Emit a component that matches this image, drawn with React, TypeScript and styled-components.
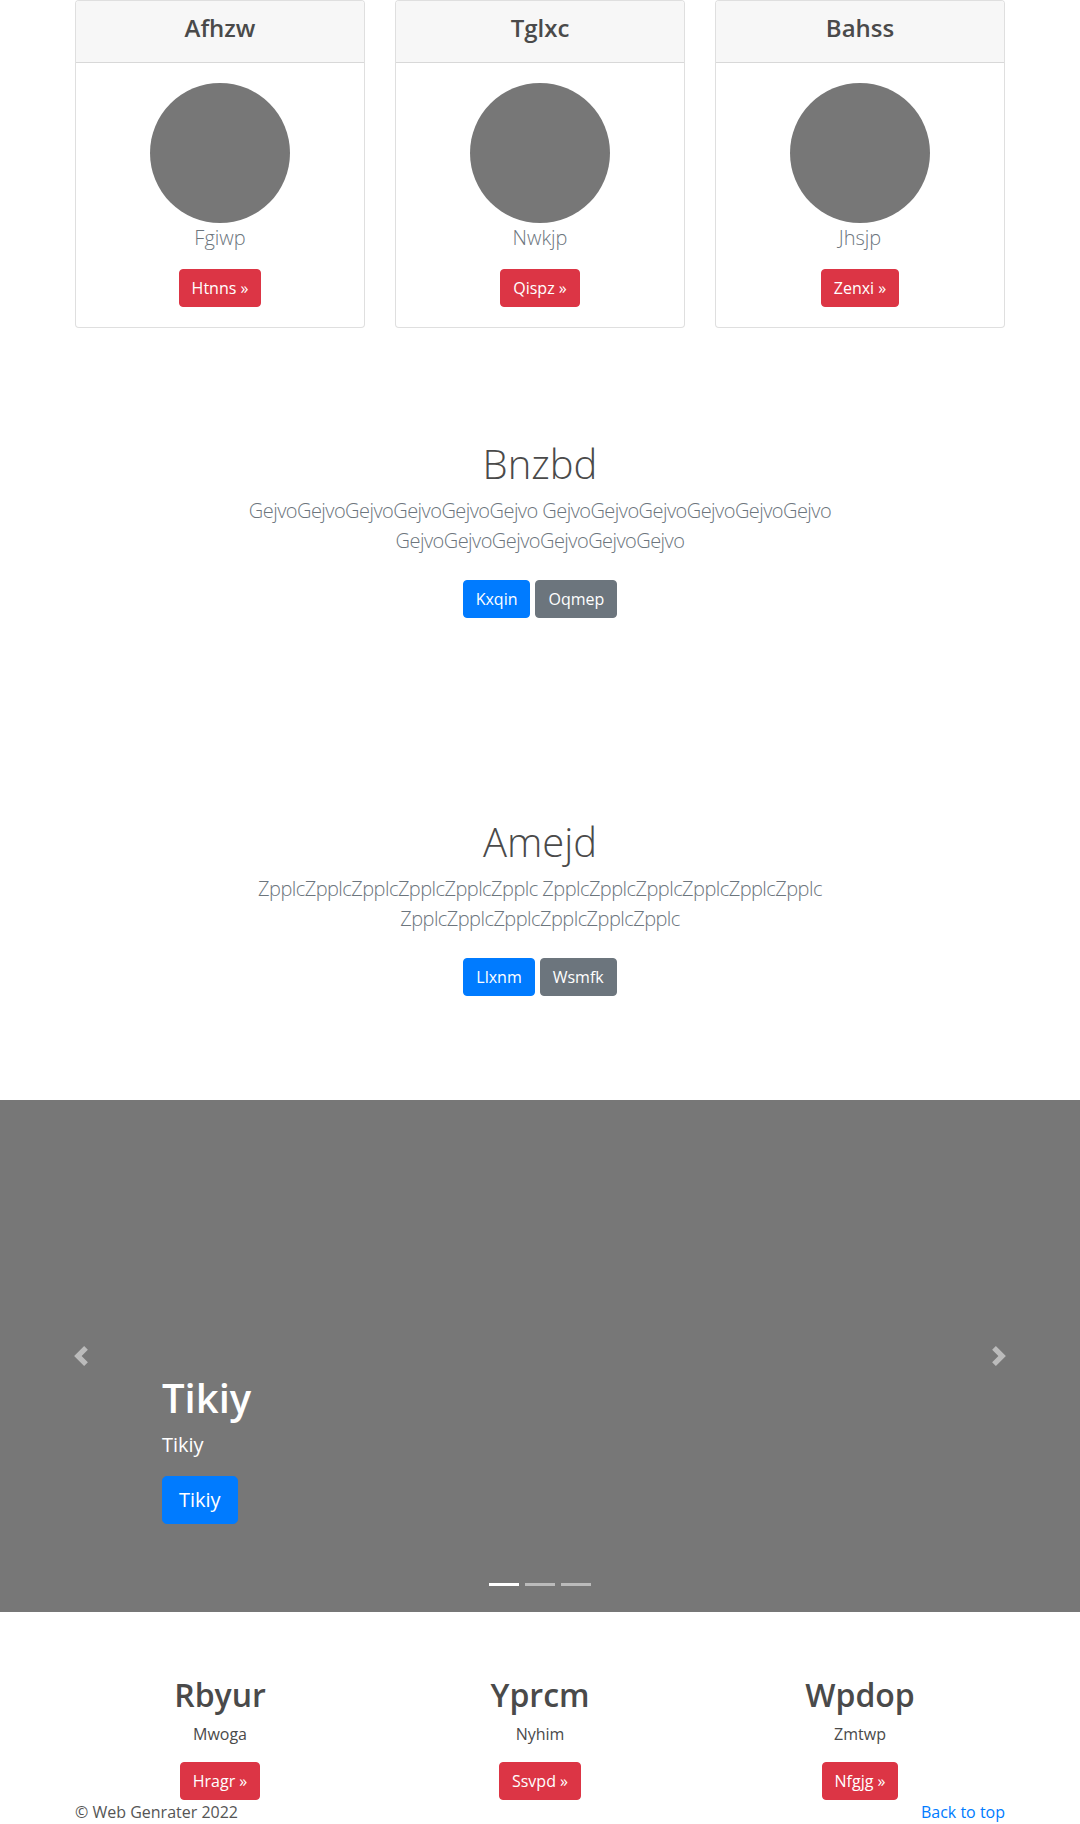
import React from "react";
import styled, { createGlobalStyle, css } from "styled-components";

const FONT = '"Segoe UI", "Open Sans", "Noto Sans", "Liberation Sans", sans-serif';

const GlobalStyle = createGlobalStyle`
  *, *::before, *::after { box-sizing: border-box; }
  html, body { margin: 0; padding: 0; }
  body {
    font-family: ${FONT};
    font-size: 16px;
    line-height: 1.5;
    color: #4a4a4a;
    background: #fff;
  }
`;

const Page = styled.div`
  width: 100%;
`;

const Container = styled.div`
  width: 930px;
  margin: 0 auto;
`;

const CardGrid = styled(Container)`
  display: grid;
  grid-template-columns: repeat(3, 1fr);
  column-gap: 30px;
  padding-bottom: 16px;
`;

const Card = styled.div`
  border: 1px solid rgba(0, 0, 0, 0.125);
  border-radius: 4px;
  background: #fff;
  overflow: hidden;
  text-align: center;
`;

const CardHeader = styled.div`
  background: #f7f7f7;
  border-bottom: 1px solid rgba(0, 0, 0, 0.125);
  padding: 13px 20px 11px;
`;

const CardTitle = styled.h4`
  margin: 0 0 8px;
  font-size: 24px;
  font-weight: 600;
  line-height: 1.2;
  color: #4a4a4a;
`;

const CardBody = styled.div`
  padding: 20px;
  display: flex;
  flex-direction: column;
  align-items: center;
`;

const Avatar = styled.svg`
  display: block;
  width: 140px;
  height: 140px;
`;

const Lead = styled.p`
  margin: 0 0 16px;
  font-size: 20px;
  font-weight: 300;
  line-height: 1.5;
  color: #6c757d;
`;

type Variant = "primary" | "secondary" | "danger";
const COLORS: Record<Variant, string> = {
  primary: "#007bff",
  secondary: "#6c757d",
  danger: "#dc3545",
};

const Button = styled.a<{ $variant: Variant; $large?: boolean }>`
  display: inline-block;
  font-family: ${FONT};
  font-weight: 400;
  color: #fff;
  text-decoration: none;
  white-space: nowrap;
  background: ${(p) => COLORS[p.$variant]};
  border: 1px solid ${(p) => COLORS[p.$variant]};
  ${(p) =>
    p.$large
      ? css`
          padding: 8px 16px;
          font-size: 20px;
          line-height: 1.5;
          border-radius: 4.8px;
        `
      : css`
          padding: 6px 12px;
          font-size: 16px;
          line-height: 1.5;
          border-radius: 4px;
        `}
`;

const Hero = styled.section`
  padding: 96px 15px;
  text-align: center;
`;

const HeroInner = styled.div`
  max-width: 640px;
  margin: 0 auto;
`;

const HeroTitle = styled.h1`
  margin: 0 0 8px;
  font-size: 40px;
  font-weight: 300;
  line-height: 1.2;
  color: #4a4a4a;
`;

const HeroText = styled.p`
  margin: 0 0 16px;
  font-size: 20px;
  font-weight: 300;
  line-height: 1.5;
  letter-spacing: -0.55px;
  color: #6c757d;
`;

const ButtonRow = styled.div`
  display: flex;
  justify-content: center;
  gap: 5px;
  padding: 8px 0;
`;

const Carousel = styled.div`
  position: relative;
  height: 512px;
  background: #777;
  margin-bottom: 64px;
  overflow: hidden;
`;

const Caption = styled.div`
  position: absolute;
  left: 15%;
  right: 15%;
  bottom: 52px;
  padding: 20px 0;
  color: #fff;
  text-align: left;
  z-index: 10;
`;

const CaptionTitle = styled.h1`
  margin: 0 0 8px;
  font-size: 40px;
  font-weight: 600;
  line-height: 1.2;
`;

const CaptionText = styled.p`
  margin: 0 0 16px;
  font-size: 20px;
  line-height: 1.5;
`;

const CaptionAction = styled.p`
  margin: 0 0 16px;
`;

const Control = styled.a<{ $side: "left" | "right" }>`
  position: absolute;
  top: 0;
  bottom: 0;
  ${(p) => (p.$side === "left" ? "left: 0;" : "right: 0;")}
  width: 15%;
  display: flex;
  align-items: center;
  justify-content: center;
  opacity: 0.5;
  z-index: 11;
`;

const ControlIcon = styled.svg`
  width: 20px;
  height: 20px;
  display: block;
`;

const Indicators = styled.ol`
  position: absolute;
  left: 15%;
  right: 15%;
  bottom: 0;
  margin: 0 0 16px;
  padding: 0;
  list-style: none;
  display: flex;
  justify-content: center;
  z-index: 15;
`;

const Indicator = styled.li<{ $active?: boolean }>`
  width: 30px;
  height: 3px;
  margin: 0 3px;
  box-sizing: content-box;
  border-top: 10px solid transparent;
  border-bottom: 10px solid transparent;
  background-clip: padding-box;
  background-color: #fff;
  opacity: ${(p) => (p.$active ? 1 : 0.5)};
`;

const Marketing = styled(Container)`
  display: grid;
  grid-template-columns: repeat(3, 1fr);
  column-gap: 30px;
  text-align: center;
`;

const Feature = styled.div`
  display: flex;
  flex-direction: column;
  align-items: center;
`;

const FeatureTitle = styled.h2`
  margin: 0 0 8px;
  font-size: 32px;
  font-weight: 600;
  line-height: 1.2;
  color: #4a4a4a;
`;

const FeatureText = styled.p`
  margin: 0 0 16px;
  font-size: 16px;
  line-height: 1.5;
  color: #4a4a4a;
`;

const Footer = styled(Container)`
  display: flex;
  justify-content: space-between;
  align-items: baseline;
  padding-bottom: 24px;
`;

const FooterText = styled.p`
  margin: 0;
  font-size: 16px;
  line-height: 1.5;
  color: #555;
`;

const FooterLink = styled.a`
  color: #007bff;
  text-decoration: none;
  font-size: 16px;
  line-height: 1.5;
`;

const cards = [
  { title: "Afhzw", lead: "Fgiwp", action: "Htnns" },
  { title: "Tglxc", lead: "Nwkjp", action: "Qispz" },
  { title: "Bahss", lead: "Jhsjp", action: "Zenxi" },
];

const heroes = [
  { title: "Bnzbd", word: "Gejvo", primary: "Kxqin", secondary: "Oqmep" },
  { title: "Amejd", word: "Zpplc", primary: "Llxnm", secondary: "Wsmfk" },
];

const features = [
  { title: "Rbyur", text: "Mwoga", action: "Hragr" },
  { title: "Yprcm", text: "Nyhim", action: "Ssvpd" },
  { title: "Wpdop", text: "Zmtwp", action: "Nfgjg" },
];

export default function App() {
  return (
    <Page>
      <GlobalStyle />
      <CardGrid>
        {cards.map((c) => (
          <Card key={c.title}>
            <CardHeader>
              <CardTitle>{c.title}</CardTitle>
            </CardHeader>
            <CardBody>
              <Avatar viewBox="0 0 140 140" aria-hidden="true">
                <circle cx="70" cy="70" r="70" fill="#777" />
              </Avatar>
              <Lead>{c.lead}</Lead>
              <Button $variant="danger" href="#">
                {c.action} »
              </Button>
            </CardBody>
          </Card>
        ))}
      </CardGrid>

      {heroes.map((h) => {
        const w = h.word.repeat(6);
        return (
          <Hero key={h.title}>
            <HeroInner>
              <HeroTitle>{h.title}</HeroTitle>
              <HeroText>{`${w} ${w} ${w}`}</HeroText>
              <ButtonRow>
                <Button $variant="primary" href="#">
                  {h.primary}
                </Button>
                <Button $variant="secondary" href="#">
                  {h.secondary}
                </Button>
              </ButtonRow>
            </HeroInner>
          </Hero>
        );
      })}

      <Carousel>
        <Indicators>
          <Indicator $active />
          <Indicator />
          <Indicator />
        </Indicators>
        <Caption>
          <CaptionTitle>Tikiy</CaptionTitle>
          <CaptionText>Tikiy</CaptionText>
          <CaptionAction>
            <Button $variant="primary" $large href="#">
              Tikiy
            </Button>
          </CaptionAction>
        </Caption>
        <Control $side="left" href="#">
          <ControlIcon viewBox="0 0 8 8" aria-hidden="true">
            <path fill="#fff" d="M5.25 0l-4 4 4 4 1.5-1.5-2.5-2.5 2.5-2.5-1.5-1.5z" />
          </ControlIcon>
        </Control>
        <Control $side="right" href="#">
          <ControlIcon viewBox="0 0 8 8" aria-hidden="true">
            <path fill="#fff" d="M2.75 0l-1.5 1.5 2.5 2.5-2.5 2.5 1.5 1.5 4-4-4-4z" />
          </ControlIcon>
        </Control>
      </Carousel>

      <Marketing>
        {features.map((f) => (
          <Feature key={f.title}>
            <FeatureTitle>{f.title}</FeatureTitle>
            <FeatureText>{f.text}</FeatureText>
            <Button $variant="danger" href="#">
              {f.action} »
            </Button>
          </Feature>
        ))}
      </Marketing>

      <Footer>
        <FooterText>© Web Genrater 2022</FooterText>
        <FooterLink href="#">Back to top</FooterLink>
      </Footer>
    </Page>
  );
}
